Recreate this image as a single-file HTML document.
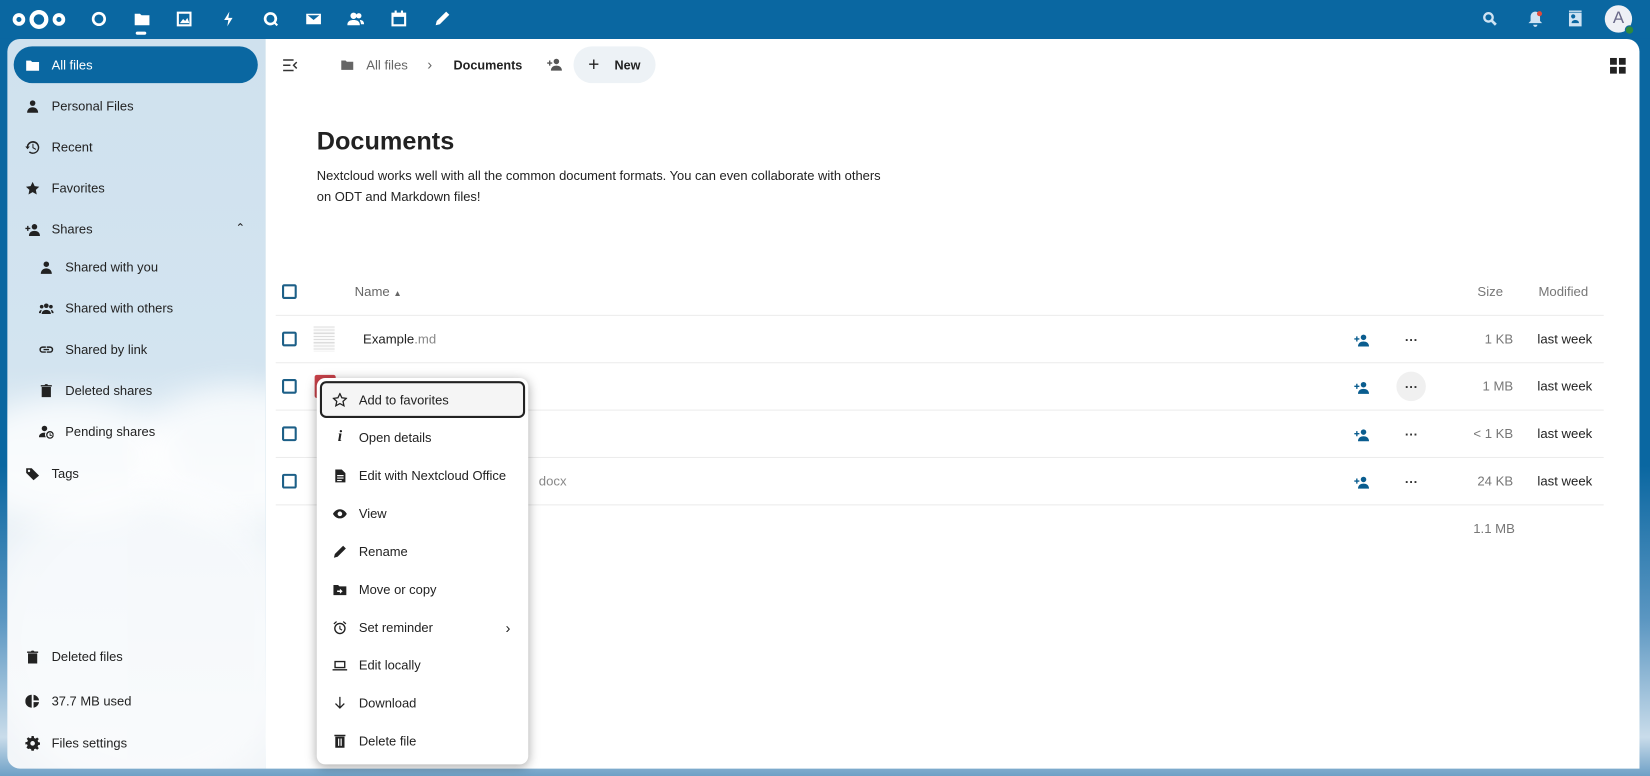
<!DOCTYPE html>
<html><head><meta charset="utf-8"><style>
*{box-sizing:border-box;margin:0;padding:0}
html,body{width:1650px;height:776px;overflow:hidden;background:#0a67a1}
#w{position:absolute;left:0;top:0;width:1568px;height:737px;transform:scale(1.05230,1.05292);transform-origin:0 0;font-family:"Liberation Sans",sans-serif;font-size:12.5px;color:#222;white-space:nowrap}
.bg{position:absolute;left:0;top:0;width:1568px;height:737px;background:linear-gradient(180deg,#0a67a1 0,#0a67a1 60%,#5c97c2 80%,#c9dcea 95%,#6ea0c6 100%)}
.top{position:absolute;left:0;top:0;width:1568px;height:37px;background:#0a67a1}
.ti{position:absolute;top:10px;width:16px;height:16px;fill:#fff}
.side{position:absolute;left:7px;top:37px;width:245px;height:693px;border-radius:12px 0 0 12px;background:linear-gradient(180deg,#cfe1ee 0,#d3e4f0 45%,#e9f1f7 60%,#f3f6f9 100%);overflow:hidden}
.cloud{position:absolute;background:#fff;border-radius:50%;filter:blur(14px);opacity:.75}
.main{position:absolute;left:252px;top:37px;width:1306px;height:693px;background:#fff;border-radius:0 12px 0 0}
.ni{position:absolute;left:6px;height:35px;width:232px;border-radius:18px;display:flex;align-items:center;padding-left:11px;color:#222;font-size:12.3px}
.ni svg{width:14px;height:14px;margin-right:11px;fill:#222}
.ni.act{background:#0a67a1;color:#fff}
.ni.act svg{fill:#fff}
.sub{padding-left:24px}
.row{position:absolute;left:10px;width:1262px;height:45px;border-bottom:1px solid #ececec}
.cb{position:absolute;left:6px;width:14px;height:14px;border:2px solid #1c5f87;border-radius:2px}
.menu{position:absolute;left:301px;top:359px;width:201px;height:367px;background:#fff;border-radius:8px;box-shadow:0 2px 10px rgba(0,0,0,.35)}
.mi{position:absolute;left:3px;width:195px;height:35px;display:flex;align-items:center;padding-left:12px;font-size:12.3px;color:#222}
.mi svg{width:14px;height:14px;margin-right:11px;fill:#222}
</style></head><body><div id="w">
<div class="bg"></div>
<div class="top">
<svg style="position:absolute;left:11px;top:8px" width="52" height="21" viewBox="0 0 52 21"><circle cx="7" cy="10.5" r="4.2" fill="none" stroke="#fff" stroke-width="3.6"/><circle cx="26" cy="10.5" r="7" fill="none" stroke="#fff" stroke-width="4"/><circle cx="45" cy="10.5" r="4.2" fill="none" stroke="#fff" stroke-width="3.6"/></svg>
<svg class="ti" style="left:86px" viewBox="0 0 16 16"><circle cx="8" cy="8" r="5.5" fill="none" stroke="#fff" stroke-width="2.5"/></svg>
<svg class="ti" style="left:127px" viewBox="0 0 16 16"><path d="M1 3h5l1.5 1.5H15V14H1z"/></svg>
<div style="position:absolute;left:129px;top:30px;width:10px;height:3px;border-radius:2px;background:#fff"></div>
<svg class="ti" style="left:167px" viewBox="0 0 16 16"><path d="M1 1h14v14H1zM3 3v10h10V3zM4 12l3-4 2 2 2-3 2 5z"/></svg>
<svg class="ti" style="left:209px" viewBox="0 0 16 16"><path d="M9 1L4 9h4l-1 6 5-8H8z"/></svg>
<svg class="ti" style="left:249px" viewBox="0 0 16 16"><path d="M8 1.5a6.3 6.3 0 1 0 3.8 11.3l2 2 1.4-1.4-2-2A6.3 6.3 0 0 0 8 1.5zm0 2.5a3.8 3.8 0 1 1 0 7.6A3.8 3.8 0 0 1 8 4z"/></svg>
<svg class="ti" style="left:290px" viewBox="0 0 16 16"><path d="M1 3h14v10H1zm1.5 1.5L8 9l5.5-4.5z" fill-rule="evenodd"/></svg>
<svg class="ti" style="left:330px" viewBox="0 0 16 16"><circle cx="6" cy="5" r="3"/><circle cx="11" cy="5" r="2.5"/><path d="M0 14c0-4 3-5 6-5s6 1 6 5zM12 9c2 0 4 1 4 4h-3c0-2-1-3-1-4z"/></svg>
<svg class="ti" style="left:371px" viewBox="0 0 16 16"><path d="M4 0h2v2h4V0h2v2h3v13H1V2h3zM3 6v7h10V6z"/></svg>
<svg class="ti" style="left:412px" viewBox="0 0 16 16"><path d="M12 1l3 3-9 9-4 1 1-4z"/></svg>
<svg class="ti" style="left:1408px" viewBox="0 0 16 16"><circle cx="6.5" cy="6.5" r="4" fill="none" stroke="#cfe3f3" stroke-width="2.2"/><path d="M9.5 9.5l4 4" stroke="#cfe3f3" stroke-width="2.6"/></svg>
<svg class="ti" style="left:1451px" viewBox="0 0 16 16"><path d="M8 1c3 0 4.5 2.5 4.5 5v4l2 2H1.5l2-2V6C3.5 3.5 5 1 8 1zM6 13.5h4a2 2 0 0 1-4 0z" fill="#cfe3f3"/><circle cx="12" cy="3" r="2.4" fill="#e04a3b"/></svg>
<svg class="ti" style="left:1489px" viewBox="0 0 16 16"><path d="M2 2h12v13H2zm6 3.5a2 2 0 1 0 0 .1zM4.5 12h7c0-2-1.5-3-3.5-3s-3.5 1-3.5 3z" fill="#cfe3f3" fill-rule="evenodd"/><rect x="2" y="0" width="12" height="1.3" fill="#cfe3f3"/></svg>
<div style="position:absolute;left:1525px;top:5px;width:26px;height:26px;border-radius:50%;background:#eef0f5;color:#6a6a8a;font-size:16px;text-align:center;line-height:26px">A</div>
<div style="position:absolute;left:1544px;top:24px;width:9px;height:9px;border-radius:50%;background:#2f8a3c;border:1.5px solid #0a67a1"></div>
</div>

<div class="side">
<div class="cloud" style="left:-40px;top:340px;width:200px;height:120px"></div>
<div class="cloud" style="left:120px;top:330px;width:200px;height:130px"></div>
<div class="cloud" style="left:-20px;top:420px;width:300px;height:300px;opacity:.5"></div>
<div class="ni act" style="top:7px"><svg viewBox="0 0 16 16"><path d="M1 3h5l1.5 1.5H15V14H1z"/></svg>All files</div>
<div class="ni" style="top:46px"><svg viewBox="0 0 16 16"><circle cx="8" cy="4.5" r="3"/><path d="M2 15c0-4 3-6 6-6s6 2 6 6z"/></svg>Personal Files</div>
<div class="ni" style="top:85px"><svg viewBox="0 0 16 16"><path d="M8.5 1A7 7 0 0 0 1.6 7H0l2.5 3L5 7H3.2A5.3 5.3 0 1 1 5 12.3l-1.1 1.2A7 7 0 1 0 8.5 1zM7.8 4v4.6l3.5 2.1.6-1-3-1.8V4z"/></svg>Recent</div>
<div class="ni" style="top:124px"><svg viewBox="0 0 16 16"><path d="M8 .8l2.2 4.7 5 .6-3.7 3.4 1 5L8 12l-4.5 2.5 1-5L.8 6.1l5-.6z"/></svg>Favorites</div>
<div class="ni" style="top:163px"><svg viewBox="0 0 16 16"><circle cx="10" cy="5" r="3"/><path d="M4 15c0-4 3-5.5 6-5.5s6 1.5 6 5.5zM2 4h1.5v2h2v1.5h-2v2H2v-2H0V6h2z"/></svg>Shares<span style="position:absolute;right:12px;top:10px;font-size:11px">&#8963;</span></div>
<div class="ni sub" style="top:199px"><svg viewBox="0 0 16 16"><circle cx="8" cy="4.5" r="3"/><path d="M2 15c0-4 3-6 6-6s6 2 6 6z"/></svg>Shared with you</div>
<div class="ni sub" style="top:238px"><svg viewBox="0 0 16 16"><circle cx="8" cy="5" r="2.5"/><circle cx="3" cy="6" r="2"/><circle cx="13" cy="6" r="2"/><path d="M3 14c0-3 2.5-4.5 5-4.5s5 1.5 5 4.5zM0 13c0-2 1.5-3.5 3-3.5L2 13zM16 13c0-2-1.5-3.5-3-3.5l1 3.5z"/></svg>Shared with others</div>
<div class="ni sub" style="top:277px"><svg viewBox="0 0 16 16"><path d="M4 4.5h3.5v1.6H4a1.9 1.9 0 0 0 0 3.8h3.5v1.6H4a3.5 3.5 0 0 1 0-7zm4.5 0H12a3.5 3.5 0 0 1 0 7H8.5V9.9H12a1.9 1.9 0 0 0 0-3.8H8.5zM5 7.2h6v1.6H5z"/></svg>Shared by link</div>
<div class="ni sub" style="top:316px"><svg viewBox="0 0 16 16"><path d="M3 4h10v11H3zM2 2h4l1-1h2l1 1h4v1.5H2z"/></svg>Deleted shares</div>
<div class="ni sub" style="top:355px"><svg viewBox="0 0 16 16"><circle cx="6" cy="4.5" r="3"/><path d="M0 14c0-3.5 3-5 6-5l1 .1A5 5 0 0 0 7.5 14z"/><circle cx="12" cy="11.5" r="3.5" fill="none" stroke="#222" stroke-width="1.4"/><path d="M11.6 9.5h1v2h1.4v1h-2.4z"/></svg>Pending shares</div>
<div class="ni" style="top:395px"><svg viewBox="0 0 16 16"><path d="M1 2h6l8 8-6 5-8-8zm3 1.5a1.3 1.3 0 1 0 .1 0z" fill-rule="evenodd"/></svg>Tags</div>
<div class="ni" style="top:569px"><svg viewBox="0 0 16 16"><path d="M3 4h10v11H3zM2 2h4l1-1h2l1 1h4v1.5H2z"/></svg>Deleted files</div>
<div class="ni" style="top:611px"><svg viewBox="0 0 16 16"><path d="M7 1v14A7 7 0 0 1 7 1zm2 0a7 7 0 0 1 6 6H9zm0 8h6a7 7 0 0 1-6 6z"/></svg>37.7 MB used</div>
<div class="ni" style="top:651px"><svg viewBox="0 0 16 16"><path d="M6.8 0h2.4l.4 2.2 1.5.7 1.9-1.3 1.7 1.7-1.3 1.9.7 1.5 2.2.4v2.4l-2.2.4-.7 1.5 1.3 1.9-1.7 1.7-1.9-1.3-1.5.7-.4 2.2H6.8l-.4-2.2-1.5-.7L3 14.1 1.3 12.4l1.3-1.9-.7-1.5L0 9.2V6.8l2.2-.4.7-1.5L1.6 3 3.3 1.3 5.2 2.6l1.5-.7zM8 5.5a2.5 2.5 0 1 0 0 5 2.5 2.5 0 0 0 0-5z" fill-rule="evenodd"/></svg>Files settings</div>
</div>

<div class="main">
<svg style="position:absolute;left:17px;top:19px" width="14" height="12" viewBox="0 0 14 12"><path d="M0 1h10M0 6h7M0 11h10M13 3l-3 3 3 3" stroke="#333" stroke-width="1.4" fill="none"/></svg>
<svg style="position:absolute;left:71px;top:18px" width="14" height="13" viewBox="0 0 16 16"><path d="M1 3h5l1.5 1.5H15V14H1z" fill="#666"/></svg>
<div style="position:absolute;left:96px;top:18px;color:#666">All files</div>
<div style="position:absolute;left:154px;top:16px;color:#666;font-size:14px">&#8250;</div>
<div style="position:absolute;left:179px;top:18px;font-weight:bold;color:#222;font-size:12px">Documents</div>
<svg style="position:absolute;left:267px;top:17px" width="16" height="14" viewBox="0 0 16 16"><circle cx="10" cy="5" r="3" fill="#555"/><path d="M4 15c0-4 3-5.5 6-5.5s6 1.5 6 5.5zM2 4h1.5v2h2v1.5h-2v2H2v-2H0V6h2z" fill="#555"/></svg>
<div style="position:absolute;left:293px;top:7px;width:78px;height:35px;border-radius:18px;background:#edf2f6"></div>
<div style="position:absolute;left:307px;top:14px;font-size:18px;color:#222">+</div>
<div style="position:absolute;left:332px;top:18px;font-weight:bold;color:#222;font-size:12px">New</div>
<svg style="position:absolute;left:1278px;top:18px" width="15" height="15" viewBox="0 0 15 15"><path d="M0 0h6.5v6.5H0zM8.5 0H15v6.5H8.5zM0 8.5h6.5V15H0zM8.5 8.5H15V15H8.5z" fill="#222"/></svg>
<div style="position:absolute;left:49px;top:84px;font-size:24px;font-weight:bold;color:#222">Documents</div>
<div style="position:absolute;left:49px;top:121px;font-size:12.3px;line-height:19.5px;color:#222">Nextcloud works well with all the common document formats. You can even collaborate with others<br>on ODT and Markdown files!</div>
<div class="row" style="top:218px"><div class="cb" style="top:15px"></div><div style="position:absolute;left:75px;top:15px;color:#666">Name <span style="font-size:8px">&#9650;</span></div><div style="position:absolute;left:1142px;top:15px;color:#777">Size</div><div style="position:absolute;left:1200px;top:15px;color:#777">Modified</div></div>
<div class="row" style="top:263px"><div class="cb" style="top:15px"></div>
<div style="position:absolute;left:36px;top:10px;width:20px;height:24px;background:repeating-linear-gradient(180deg,#ddd 0,#ddd 1px,#fafafa 1px,#fafafa 3px)"></div>
<div style="position:absolute;left:83px;top:15px">Example<span style="color:#888">.md</span></div></div>
<div class="row" style="top:308px"><div class="cb" style="top:15px"></div><div style="position:absolute;left:37px;top:11px;width:20px;height:22px;background:#c9424a;border-radius:2px"></div>
<div style="position:absolute;left:1065px;top:8px;width:28px;height:28px;border-radius:50%;background:#f0f0f0"></div></div>
<div class="row" style="top:353px"><div class="cb" style="top:15px"></div></div>
<div class="row" style="top:398px"><div class="cb" style="top:15px"></div><div style="position:absolute;left:250px;top:15px;color:#888">docx</div></div>
<div style="position:absolute;left:1148px;top:458px;color:#777">1.1 MB</div>
</div>
<div class="menu">
<div class="mi" style="top:3px;border:2px solid #222;border-radius:6px;background:#f5f5f5;padding-left:10px"><svg viewBox="0 0 16 16"><path d="M8 1l2.1 4.5 4.9.6-3.6 3.3 1 4.8L8 11.8l-4.4 2.4 1-4.8L1 6.1l4.9-.6z" fill="none" stroke="#222" stroke-width="1.4"/></svg>Add to favorites</div>
<div class="mi" style="top:39px"><span style="width:14px;margin-right:11px;font-family:'Liberation Serif',serif;font-style:italic;font-weight:bold;font-size:15px;text-align:center">i</span>Open details</div>
<div class="mi" style="top:75px"><svg viewBox="0 0 16 16"><path d="M3 1h7l4 4v10H3zM5 7h7v1.3H5zm0 2.7h7V11H5zm0 2.7h5v1.3H5z" fill-rule="evenodd"/></svg>Edit with Nextcloud Office</div>
<div class="mi" style="top:111px"><svg viewBox="0 0 16 16"><path d="M8 3C4 3 1.5 6 .5 8c1 2 3.5 5 7.5 5s6.5-3 7.5-5C14.5 6 12 3 8 3zm0 2.5a2.5 2.5 0 1 1 0 5 2.5 2.5 0 0 1 0-5z" fill-rule="evenodd"/></svg>View</div>
<div class="mi" style="top:147px"><svg viewBox="0 0 16 16"><path d="M11.5 1.5l3 3-9 9-4 1 1-4z"/></svg>Rename</div>
<div class="mi" style="top:183px"><svg viewBox="0 0 16 16"><path d="M1 3h5l1.5 1.5H15V14H1zm7 4v2H5v1.5h3v2l3-2.7z" fill-rule="evenodd"/></svg>Move or copy</div>
<div class="mi" style="top:219px"><svg viewBox="0 0 16 16"><circle cx="8" cy="9" r="5.5" fill="none" stroke="#222" stroke-width="1.5"/><path d="M7.4 6h1.2v3l2 1.3-.6 1L7.4 9.7zM1 3.5L4 1l.8 1L2 4.5zM15 3.5L12 1l-.8 1L14 4.5z"/></svg>Set reminder<span style="position:absolute;right:14px;font-size:14px">&#8250;</span></div>
<div class="mi" style="top:255px"><svg viewBox="0 0 16 16"><path d="M2 3h12v8H2zm1.5 1.5v5h9v-5zM0 12h16v1.5H0z" fill-rule="evenodd"/></svg>Edit locally</div>
<div class="mi" style="top:291px"><svg viewBox="0 0 16 16"><path d="M7.3 1h1.4v10.3l3.6-3.6 1 1L8 14 2.7 8.7l1-1 3.6 3.6z"/></svg>Download</div>
<div class="mi" style="top:327px"><svg viewBox="0 0 16 16"><path d="M3 3h10v12H3zM2 1h12v1.5H2zM6 5v8h1.3V5zm2.7 0v8H10V5z" fill-rule="evenodd"/></svg>Delete file</div>
</div>
<div style="position:absolute;left:0;top:0">
<div style="position:absolute;left:1286px;top:316px"><svg width="16" height="14" viewBox="0 0 16 16"><circle cx="10" cy="5" r="3" fill="#0a5d8f"/><path d="M4 15c0-4 3-5.5 6-5.5s6 1.5 6 5.5zM2 4h1.5v2h2v1.5h-2v2H2v-2H0V6h2z" fill="#0a5d8f"/></svg></div>
<div style="position:absolute;left:1286px;top:361px"><svg width="16" height="14" viewBox="0 0 16 16"><circle cx="10" cy="5" r="3" fill="#0a5d8f"/><path d="M4 15c0-4 3-5.5 6-5.5s6 1.5 6 5.5zM2 4h1.5v2h2v1.5h-2v2H2v-2H0V6h2z" fill="#0a5d8f"/></svg></div>
<div style="position:absolute;left:1286px;top:406px"><svg width="16" height="14" viewBox="0 0 16 16"><circle cx="10" cy="5" r="3" fill="#0a5d8f"/><path d="M4 15c0-4 3-5.5 6-5.5s6 1.5 6 5.5zM2 4h1.5v2h2v1.5h-2v2H2v-2H0V6h2z" fill="#0a5d8f"/></svg></div>
<div style="position:absolute;left:1286px;top:451px"><svg width="16" height="14" viewBox="0 0 16 16"><circle cx="10" cy="5" r="3" fill="#0a5d8f"/><path d="M4 15c0-4 3-5.5 6-5.5s6 1.5 6 5.5zM2 4h1.5v2h2v1.5h-2v2H2v-2H0V6h2z" fill="#0a5d8f"/></svg></div>
<div style="position:absolute;left:1335px;top:316px;font-weight:bold;color:#333">&middot;&middot;&middot;</div>
<div style="position:absolute;left:1335px;top:361px;font-weight:bold;color:#333">&middot;&middot;&middot;</div>
<div style="position:absolute;left:1335px;top:406px;font-weight:bold;color:#333">&middot;&middot;&middot;</div>
<div style="position:absolute;left:1335px;top:451px;font-weight:bold;color:#333">&middot;&middot;&middot;</div>
<div style="position:absolute;left:1390px;width:48px;text-align:right;top:315px;color:#777">1 KB</div>
<div style="position:absolute;left:1390px;width:48px;text-align:right;top:360px;color:#777">1 MB</div>
<div style="position:absolute;left:1390px;width:48px;text-align:right;top:405px;color:#777">&lt; 1 KB</div>
<div style="position:absolute;left:1390px;width:48px;text-align:right;top:450px;color:#777">24 KB</div>
<div style="position:absolute;left:1461px;top:315px">last week</div>
<div style="position:absolute;left:1461px;top:360px">last week</div>
<div style="position:absolute;left:1461px;top:405px">last week</div>
<div style="position:absolute;left:1461px;top:450px">last week</div>
</div>
</div></body></html>
